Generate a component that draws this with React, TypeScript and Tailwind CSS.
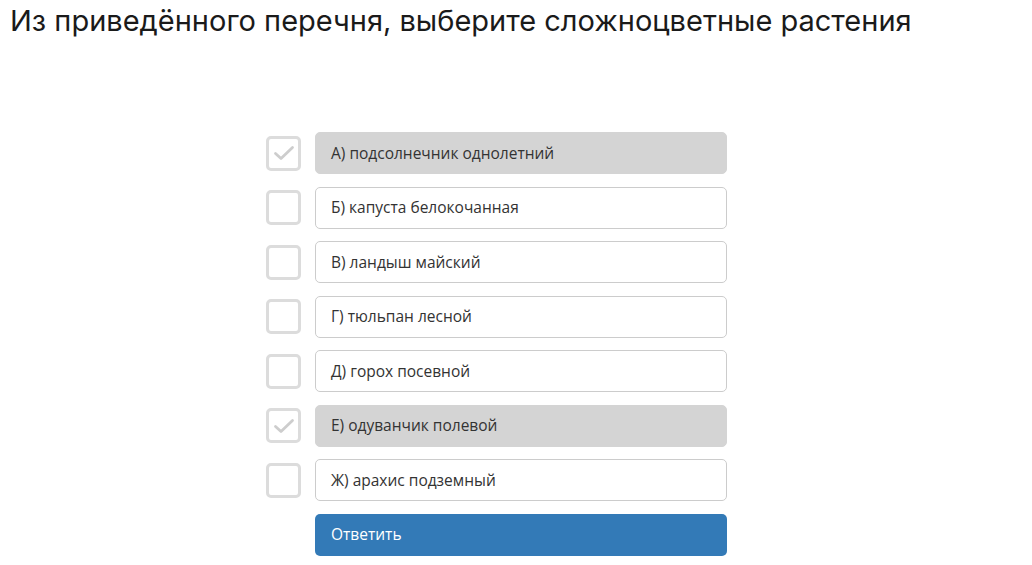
import React, { useState } from 'react';

const options = [
  { id: 'a', label: 'А) подсолнечник однолетний' },
  { id: 'b', label: 'Б) капуста белокочанная' },
  { id: 'c', label: 'В) ландыш майский' },
  { id: 'd', label: 'Г) тюльпан лесной' },
  { id: 'e', label: 'Д) горох посевной' },
  { id: 'f', label: 'Е) одуванчик полевой' },
  { id: 'g', label: 'Ж) арахис подземный' },
];

function Check() {
  return (
    <svg viewBox="0 0 24 24" className="w-[24px] h-[24px]" fill="none" stroke="#cdcdcd" strokeWidth="2.8" strokeLinecap="round" strokeLinejoin="round">
      <path d="M3.5 12.5l5.5 5L20.5 6.5" />
    </svg>
  );
}

export default function App() {
  const [selected, setSelected] = useState<string[]>(['a', 'f']);

  const toggle = (id: string) => {
    setSelected(s => (s.includes(id) ? s.filter(x => x !== id) : [...s, id]));
  };

  return (
    <div className="min-h-screen bg-white pt-[2px]" style={{ fontFamily: '"Open Sans", sans-serif' }}>
      <h1 className="pl-[10px] text-[29px] leading-[38px] text-[#1a1a1a]" style={{ fontFamily: 'Inter, sans-serif' }}>
        Из приведённого перечня, выберите сложноцветные растения
      </h1>

      <div className="mt-[92px] ml-[266px] w-[461px] flex flex-col gap-[12.5px]">
        {options.map(o => {
          const on = selected.includes(o.id);
          return (
            <div key={o.id} className="flex items-center gap-[14px] cursor-pointer" onClick={() => toggle(o.id)}>
              <div className="w-[35px] h-[35px] shrink-0 rounded-[5px] border-[3px] border-[#dcdcdc] flex items-center justify-center bg-white">
                {on && <Check />}
              </div>
              <div
                className={`flex-1 h-[42px] rounded-[5px] border px-[15px] pt-[1px] flex items-center text-[15.5px] text-[#333] ${
                  on ? 'bg-[#d4d4d4] border-[#d4d4d4]' : 'bg-white border-[#cccccc]'
                }`}
              >
                {o.label}
              </div>
            </div>
          );
        })}
        <div className="flex">
          <button className="ml-[49px] flex-1 h-[42px] rounded-[5px] bg-[#337ab7] px-[16px] pt-[1px] text-left text-[15.5px] text-white">
            Ответить
          </button>
        </div>
      </div>
    </div>
  );
}
